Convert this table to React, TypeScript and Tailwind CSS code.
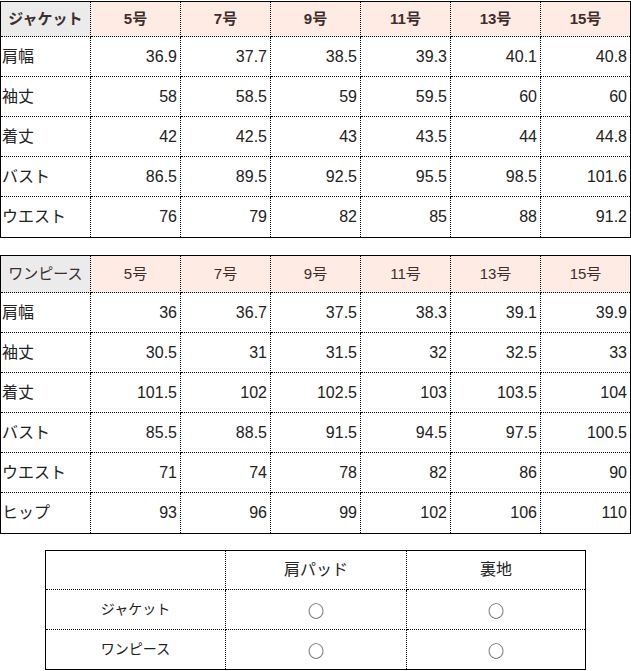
const font = { fontFamily: '"Liberation Sans", "Noto Sans CJK JP", sans-serif' };
const cjk = { fontFamily: '"Noto Sans CJK JP", sans-serif' };

const sizes = ['5号', '7号', '9号', '11号', '13号', '15号'];

const jacket: [string, string[]][] = [
  ['肩幅', ['36.9', '37.7', '38.5', '39.3', '40.1', '40.8']],
  ['袖丈', ['58', '58.5', '59', '59.5', '60', '60']],
  ['着丈', ['42', '42.5', '43', '43.5', '44', '44.8']],
  ['バスト', ['86.5', '89.5', '92.5', '95.5', '98.5', '101.6']],
  ['ウエスト', ['76', '79', '82', '85', '88', '91.2']],
];

const onepiece: [string, string[]][] = [
  ['肩幅', ['36', '36.7', '37.5', '38.3', '39.1', '39.9']],
  ['袖丈', ['30.5', '31', '31.5', '32', '32.5', '33']],
  ['着丈', ['101.5', '102', '102.5', '103', '103.5', '104']],
  ['バスト', ['85.5', '88.5', '91.5', '94.5', '97.5', '100.5']],
  ['ウエスト', ['71', '74', '78', '82', '86', '90']],
  ['ヒップ', ['93', '96', '99', '102', '106', '110']],
];

function SizeTable({
  title,
  rows,
  bold,
  headH,
}: {
  title: string;
  rows: [string, string[]][];
  bold: boolean;
  headH: string;
}) {
  const weight = bold ? 'font-bold' : 'font-normal';
  return (
    <div className="w-[631px] border border-black grid grid-cols-[90px_90px_90px_90px_90px_90px_89px] text-[16px] text-[#222]">
      <div className={`${headH} bg-[#ebebeb] text-[#3d2d2d] ${weight} flex items-center justify-center border-r border-b border-dotted border-black text-[15px]`}>
        {title}
      </div>
      {sizes.map((s, i) => (
        <div
          key={s}
          className={`${headH} bg-[#fdebe4] text-[#3d2d2d] ${weight} flex items-center justify-center border-b border-dotted border-black text-[15px] ${
            i < 5 ? 'border-r' : ''
          }`}
        >
          {s}
        </div>
      ))}
      {rows.map(([label, vals], r) => {
        const last = r === rows.length - 1;
        return [
          <div
            key={label}
            className={`h-[40px] flex items-center pl-px border-r border-dotted border-black ${last ? 'h-[39px]' : 'border-b'}`}
          >
            {label}
          </div>,
          ...vals.map((v, i) => (
            <div
              key={label + i}
              className={`h-[40px] flex items-center justify-end pr-[3px] border-dotted border-black ${
                last ? 'h-[39px]' : 'border-b'
              } ${i < 5 ? 'border-r' : ''}`}
            >
              {v}
            </div>
          )),
        ];
      })}
    </div>
  );
}

function Mark() {
  return (
    <span className="text-[16px] leading-none" style={cjk}>
      ○
    </span>
  );
}

export default function App() {
  return (
    <div className="w-[631px] h-[671px] bg-white pt-px" style={font}>
      <SizeTable title="ジャケット" rows={jacket} bold headH="h-[35px]" />
      <div className="mt-[17px]">
        <SizeTable title="ワンピース" rows={onepiece} bold={false} headH="h-[37px]" />
      </div>
      <div className="mt-[16px] ml-[45px] w-[541px] border border-black grid grid-cols-[180px_181px_178px] text-[#222]">
        <div className="h-[39px] border-r border-b border-dotted border-black" />
        <div className="h-[39px] flex items-center justify-center border-r border-b border-dotted border-black text-[16px]">
          肩パッド
        </div>
        <div className="h-[39px] flex items-center justify-center border-b border-dotted border-black text-[16px]">
          裏地
        </div>
        <div className="h-[40px] flex items-center justify-center border-r border-b border-dotted border-black text-[14px]">
          ジャケット
        </div>
        <div className="h-[40px] flex items-center justify-center border-r border-b border-dotted border-black">
          <Mark />
        </div>
        <div className="h-[40px] flex items-center justify-center border-b border-dotted border-black">
          <Mark />
        </div>
        <div className="h-[39px] flex items-center justify-center border-r border-dotted border-black text-[14px]">
          ワンピース
        </div>
        <div className="h-[39px] flex items-center justify-center border-r border-dotted border-black">
          <Mark />
        </div>
        <div className="h-[39px] flex items-center justify-center">
          <Mark />
        </div>
      </div>
    </div>
  );
}
